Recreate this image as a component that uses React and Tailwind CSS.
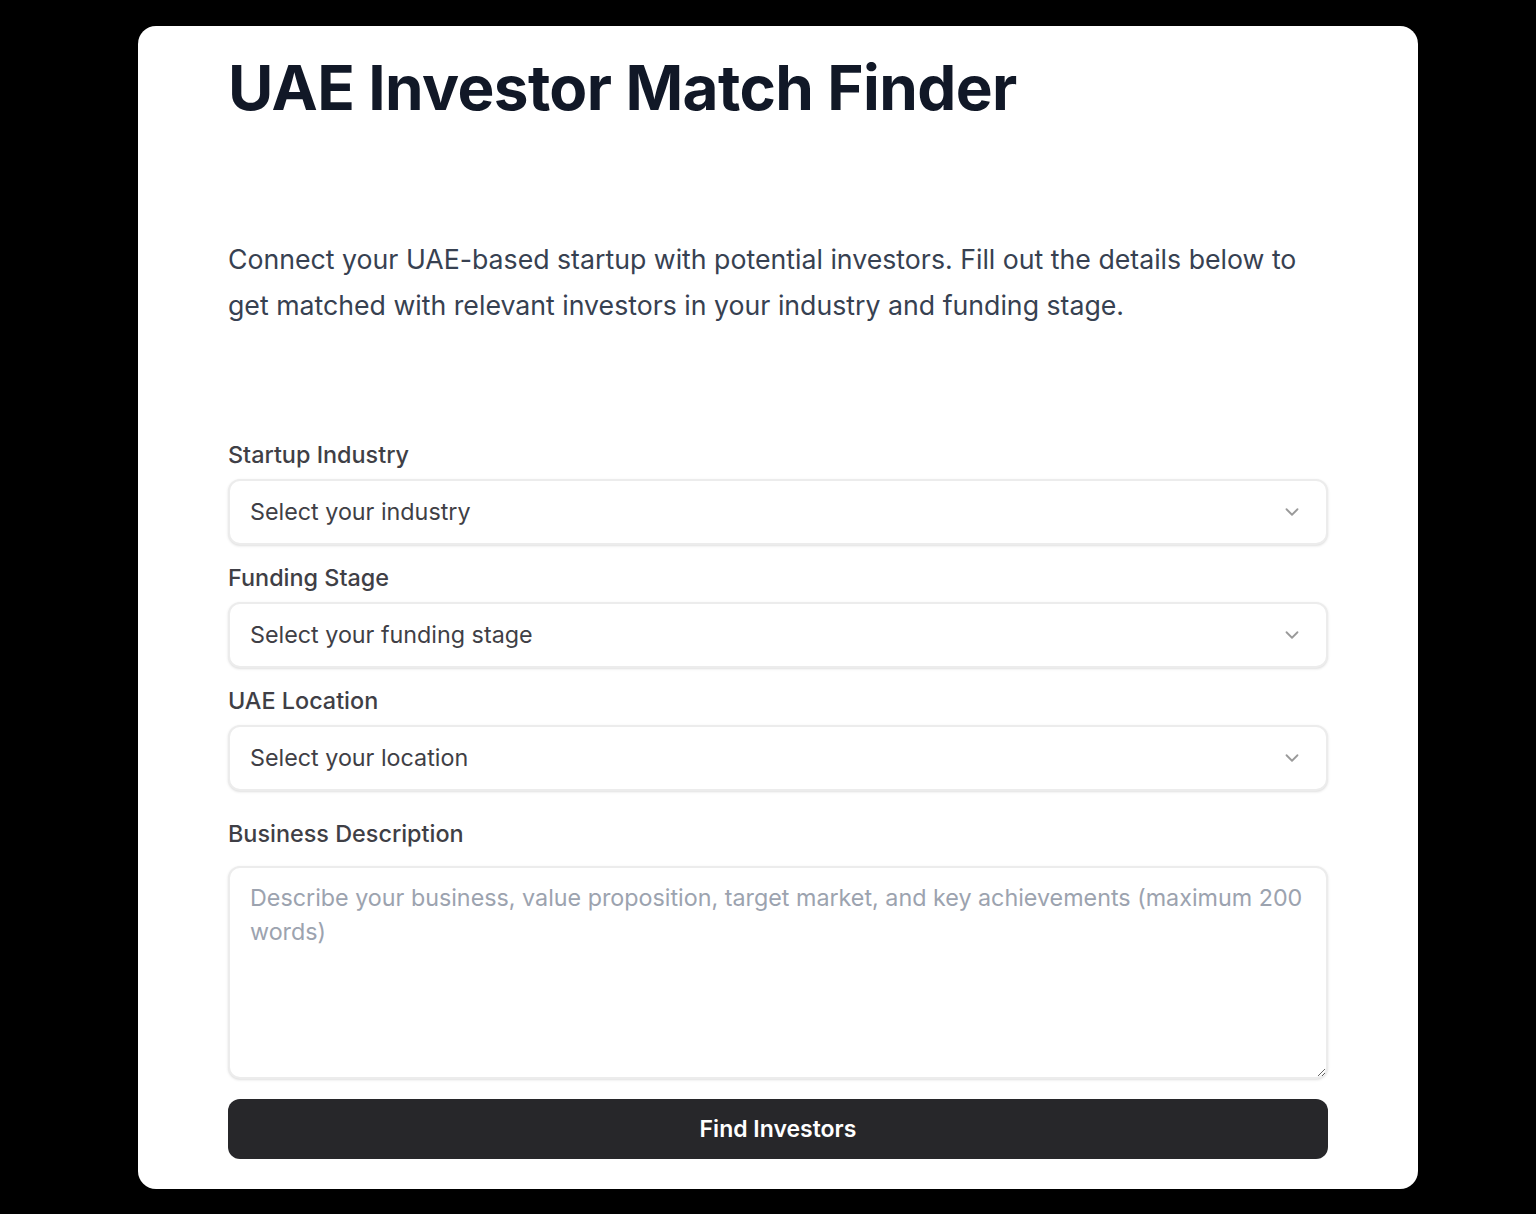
import { ChevronDown } from "lucide-react";

function SelectField({ label, placeholder, className = "" }) {
  return (
    <div className={"flex flex-col gap-[8px] " + className}>
      <label className="text-[23.4px] leading-[32px] font-medium text-[#3f3f46]">{label}</label>
      <div className="relative">
        <select
          defaultValue=""
          className="w-full h-[66px] appearance-none rounded-[12px] border-2 border-[#ececec] bg-white pl-[20px] pr-12 text-[23.3px] text-[#3f3f46] shadow-sm outline-none"
        >
          <option value="" disabled>
            {placeholder}
          </option>
        </select>
        <ChevronDown
          className="pointer-events-none absolute right-[25px] top-1/2 -translate-y-1/2 text-[#9a9a9a]"
          size={22}
          strokeWidth={2}
        />
      </div>
    </div>
  );
}

function App() {
  return (
    <div className="min-h-screen bg-black pt-[26px] pb-[25px] font-['Inter',sans-serif]">
      <div className="ml-[138px] w-[1280px] rounded-[18px] bg-white px-[90px] pt-[25px] pb-[30px]">
        <h1 className="text-[62px] leading-[74px] font-bold tracking-[-0.01em] text-[#111827]">
          UAE Investor Match Finder
        </h1>
        <p className="mt-[111px] text-[26.7px] leading-[46px] text-[#374151]">
          Connect your UAE-based startup with potential investors. Fill out the details below to get
          matched with relevant investors in your industry and funding stage.
        </p>

        <form className="mt-[111px] flex flex-col">
          <SelectField label="Startup Industry" placeholder="Select your industry" />
          <SelectField className="mt-[17px]" label="Funding Stage" placeholder="Select your funding stage" />
          <SelectField className="mt-[17px]" label="UAE Location" placeholder="Select your location" />

          <div className="mt-[27px] flex flex-col gap-[16px]">
            <label className="text-[23.4px] leading-[32px] font-medium text-[#3f3f46]">
              Business Description
            </label>
            <textarea
              className="h-[213px] w-full rounded-[12px] border-2 border-[#ececec] bg-white px-[20px] pt-[13px] pb-[14px] text-[23.3px] leading-[34px] text-[#3f3f46] shadow-sm outline-none placeholder:text-[#9ca3af]"
              placeholder="Describe your business, value proposition, target market, and key achievements (maximum 200 words)"
            />
          </div>

          <button
            type="button"
            className="mt-[20px] h-[60px] w-full rounded-[12px] bg-[#27272a] text-[23px] font-semibold text-white"
          >
            Find Investors
          </button>
        </form>
      </div>
    </div>
  );
}

export default App;
